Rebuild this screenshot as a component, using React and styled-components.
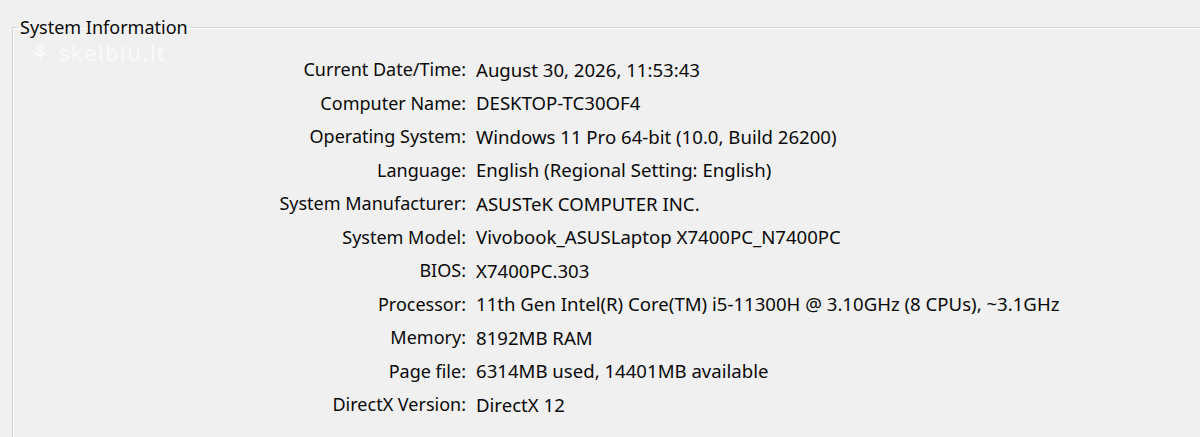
import styled, { createGlobalStyle } from 'styled-components';

const GlobalStyle = createGlobalStyle`
  html, body {
    margin: 0;
    padding: 0;
    background: #f0f0f0;
  }
  body {
    font-family: "Noto Sans", "Open Sans", sans-serif;
    color: #0a0a0a;
  }
`

const Page = styled.div`
  width: 1200px;
  height: 437px;
  overflow: hidden;
  padding: 17px 0 0 12px;
  box-sizing: border-box;
  position: relative;
`
const Group = styled.fieldset`
  margin: 0;
  padding: 15.5px 0 40px 0;
  border: 1px solid #d6d6d6;
  border-right: none;
  border-bottom: none;
  box-shadow: inset 1px 1px 0 #fbfbfb;
  min-width: 0;
`
const Title = styled.legend`
  font-size: 18px;
  padding: 0 2px;
  margin-left: 5px;
  line-height: 20px;
`
const Watermark = styled.div`
  position: absolute;
  left: 30px;
  top: 43px;
  font-size: 22px;
  line-height: 18px;
  letter-spacing: 1.5px;
  color: rgba(255, 255, 255, 0.7);
`
const Grid = styled.dl`
  margin: 0;
  display: grid;
  grid-template-columns: 453px 1fr;
  grid-auto-rows: 33.5px;
  column-gap: 10px;
  align-items: center;
`
const Label = styled.dt`
  justify-self: end;
  white-space: nowrap;
  font-size: 18px;
`
const Value = styled.dd`
  margin: 0;
  white-space: nowrap;
  font-size: 18.6px;
`

const rows = [
  ['Current Date/Time:', 'August 30, 2026, 11:53:43'],
  ['Computer Name:', 'DESKTOP-TC30OF4'],
  ['Operating System:', 'Windows 11 Pro 64-bit (10.0, Build 26200)'],
  ['Language:', 'English (Regional Setting: English)'],
  ['System Manufacturer:', 'ASUSTeK COMPUTER INC.'],
  ['System Model:', 'Vivobook_ASUSLaptop X7400PC_N7400PC'],
  ['BIOS:', 'X7400PC.303'],
  ['Processor:', '11th Gen Intel(R) Core(TM) i5-11300H @ 3.10GHz (8 CPUs), ~3.1GHz'],
  ['Memory:', '8192MB RAM'],
  ['Page file:', '6314MB used, 14401MB available'],
  ['DirectX Version:', 'DirectX 12'],
]

const App = () => {
  return (
    <Page>
      <GlobalStyle />
      <Group>
        <Title>System Information</Title>
        <Grid>
          {rows.map(([label, value]) => (
            <>
              <Label key={label}>{label}</Label>
              <Value key={label + '-v'}>{value}</Value>
            </>
          ))}
        </Grid>
      </Group>
      <Watermark>⚘ skelbiu.lt</Watermark>
    </Page>
  )
}

export default App
